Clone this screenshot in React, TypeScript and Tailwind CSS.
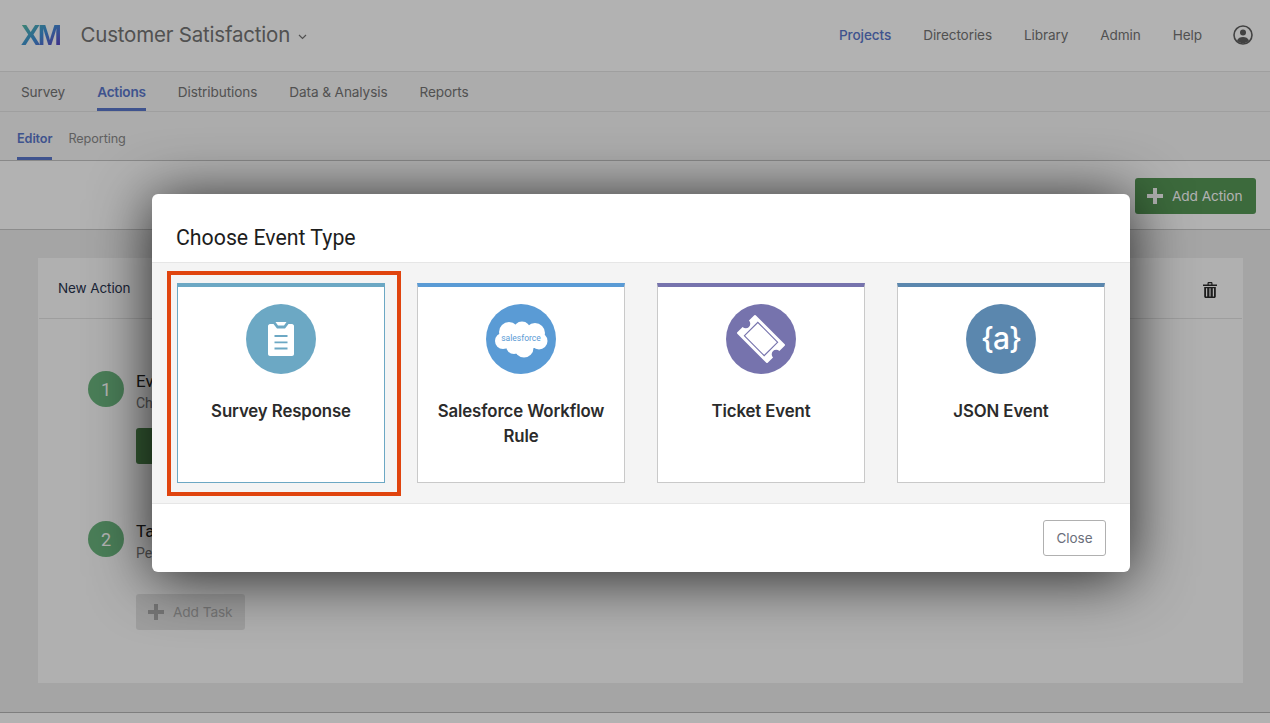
import type { ReactNode } from "react";

const font = "font-['Roboto',sans-serif]";

function PlusIcon({ className }: { className: string }) {
  return (
    <svg width="16" height="16" viewBox="0 0 16 16" className={className}>
      <path d="M6 0h4v6h6v4h-6v6H6v-6H0V6h6z" fill="currentColor" />
    </svg>
  );
}

function UserIcon() {
  return (
    <svg width="20" height="20" viewBox="0 0 20 20" className="text-[#5f5f5f]">
      <circle cx="10" cy="10" r="9" fill="none" stroke="currentColor" strokeWidth="1.6" />
      <circle cx="10" cy="7.6" r="3" fill="currentColor" />
      <path d="M4 15.6c1-2.6 3.4-3.6 6-3.6s5 1 6 3.6C14.500 17.400 12.300 18.300 10 18.300s-4.500-.9-6-2.700z" fill="currentColor" />
    </svg>
  );
}

function TrashIcon() {
  return (
    <svg width="14" height="16" viewBox="0 0 14 16" className="text-[#2a2a2a]">
      <path d="M0 2.500h14v1.500H0zM4.500 2.500V1.200C4.500.5 5 0 5.700 0h2.600c.7 0 1.200.5 1.200 1.200v1.300H8.300V1.200H5.700v1.300z" fill="currentColor" />
      <path d="M1.200 5h11.600v9.500c0 .8-.7 1.500-1.500 1.500H2.700c-.8 0-1.500-.7-1.500-1.500zM3 6.200v8.300h1.200V6.200zm3.400 0v8.300h1.200V6.200zm3.400 0v8.300H11V6.200z" fill="currentColor" fillRule="evenodd" />
    </svg>
  );
}

function ClipboardIcon() {
  return (
    <svg width="26" height="34" viewBox="0 0 26 34">
      <path d="M2 2h3.500L9 6.500h8L20.500 2H24c1 0 2 1 2 2V32c0 1-1 2-2 2H2c-1 0-2-1-2-2V4c0-1 1-2 2-2z" fill="#fff" />
      <path d="M7.500 0h11L16 3.500h-6z" fill="#fff" />
      <path d="M6.500 14h13M6.500 20.300h13M6.500 26.500h13" stroke="#6ca8c4" strokeWidth="1.800" />
    </svg>
  );
}

function SalesforceIcon() {
  return (
    <svg width="54" height="38" viewBox="0 0 54 38">
      <g fill="#fff">
        <circle cx="15" cy="12" r="10" />
        <circle cx="28" cy="10" r="8.500" />
        <circle cx="41" cy="13" r="10" />
        <circle cx="9" cy="21" r="8" />
        <circle cx="45" cy="21" r="8.500" />
        <circle cx="20" cy="26" r="8" />
        <circle cx="30" cy="28" r="9.500" />
        <rect x="10" y="10" width="36" height="18" />
      </g>
      <text x="27" y="20.500" textAnchor="middle" fontFamily="Roboto, sans-serif" fontSize="8.500" fill="#5a9bd5">
        salesforce
      </text>
    </svg>
  );
}

function TicketIcon() {
  return (
    <svg width="54" height="54" viewBox="0 0 54 54">
      <g transform="rotate(-45 27 27)">
        <path
          d="M15 5.500H22.500A4.500 4.500 0 0 0 31.500 5.500H39a1 1 0 0 1 1 1V47.500a1 1 0 0 1-1 1H31.500A4.500 4.500 0 0 0 22.500 48.500H15a1 1 0 0 1-1-1V6.500a1 1 0 0 1 1-1z"
          fill="#fff"
        />
        <rect x="17.500" y="13" width="19" height="28" fill="none" stroke="#7673ad" strokeWidth="1.100" />
      </g>
    </svg>
  );
}

type EventCard = {
  label: ReactNode;
  border: string;
  topBorder: string;
  bg: string;
  icon: ReactNode;
};

const cards: EventCard[] = [
  {
    label: "Survey Response",
    border: "border-[#6ca8c4]",
    topBorder: "border-t-[#6ca8c4]",
    bg: "bg-[#6ca8c4]",
    icon: <ClipboardIcon />,
  },
  {
    label: "Salesforce Workflow Rule",
    border: "border-[#c9c9c9]",
    topBorder: "border-t-[#5a9bd5]",
    bg: "bg-[#5a9bd5]",
    icon: <SalesforceIcon />,
  },
  {
    label: "Ticket Event",
    border: "border-[#c9c9c9]",
    topBorder: "border-t-[#7673ad]",
    bg: "bg-[#7673ad]",
    icon: <TicketIcon />,
  },
  {
    label: "JSON Event",
    border: "border-[#c9c9c9]",
    topBorder: "border-t-[#5b87ae]",
    bg: "bg-[#5b87ae]",
    icon: <span className="-mt-[3px] font-['Inter',sans-serif] text-[30px] font-medium leading-none tracking-[-1px] text-white">{"{a}"}</span>,
  },
];

function StepCircle({ n }: { n: number }) {
  return (
    <div className="flex h-9 w-9 shrink-0 items-center justify-center rounded-full bg-[#6bb57e] text-[18px] text-white">
      {n}
    </div>
  );
}

export default function App() {
  return (
    <div className={`relative h-[723px] w-full overflow-hidden bg-white ${font}`}>
      {/* Page behind the dialog */}
      <header className="flex h-[72px] items-center border-b border-[#e4e4e4] pl-[21px] pr-[17px]">
        <span className="bg-gradient-to-br from-[#5fc49a] via-[#3f8fd8] to-[#5a2fc0] bg-clip-text font-['Liberation_Sans',sans-serif] text-[29px] font-bold leading-none tracking-[-2.500px] text-transparent">
          XM
        </span>
        <span className="ml-[21px] font-['Inter',sans-serif] text-[20.500px] tracking-[-0.2px] text-[#757575]">
          Customer Satisfaction
        </span>
        <svg width="9" height="6" viewBox="0 0 9 6" className="ml-[8px] mt-[2px] text-[#757575]">
          <path d="M1 1l3.500 3.500L8 1" fill="none" stroke="currentColor" strokeWidth="1.200" />
        </svg>
        <nav className="ml-auto flex items-center gap-8 font-['Inter',sans-serif] text-[13.600px] tracking-[-0.1px] text-[#757575]">
          <span className="font-medium text-[#5b78cc]">Projects</span>
          <span>Directories</span>
          <span>Library</span>
          <span>Admin</span>
          <span>Help</span>
          <span className="ml-[-1px] flex">
            <UserIcon />
          </span>
        </nav>
      </header>

      <div className="flex h-[40px] gap-8 border-b border-[#e4e4e4] bg-[#f6f6f6] pl-[21px] font-['Inter',sans-serif] text-[13.600px] tracking-[-0.1px] text-[#757575]">
        <span className="flex items-center pt-[2px]">Survey</span>
        <span className="flex items-center border-b-[3px] border-[#5b78cc] pt-[5px] font-semibold tracking-[-0.2px] text-[#5b78cc]">Actions</span>
        <span className="flex items-center pt-[2px]">Distributions</span>
        <span className="flex items-center pt-[2px]">Data &amp; Analysis</span>
        <span className="flex items-center pt-[2px]">Reports</span>
      </div>

      <div className="flex h-[49px] gap-4 border-b border-[#c4c4c4] bg-[#f6f6f6] pl-[17px] font-['Inter',sans-serif] text-[12.700px] tracking-[-0.1px] text-[#8a8a8a]">
        <span className="flex items-center border-b-[3px] border-[#5b78cc] pt-[9px] font-semibold text-[#5b78cc]">Editor</span>
        <span className="flex items-center pt-[6px]">Reporting</span>
      </div>

      <div className="flex h-[69px] items-center justify-end border-b border-[#c9c9c9] bg-white pr-[14px]">
        <button className="mt-[2px] flex h-9 w-[121px] items-center gap-[9px] rounded-[3px] bg-[#569856] pl-[12px] font-['Inter',sans-serif] text-[13.700px] tracking-[-0.1px] text-white">
          <PlusIcon className="text-white" />
          Add Action
        </button>
      </div>

      <main className="h-[483px] border-b border-[#b5b5b5] bg-[#ececec] pl-[38px] pr-[27px] pt-[28px]">
        <section className="h-[425px] border border-[#fcfcfc] bg-[#fcfcfc]">
          <div className="flex h-[60px] items-center justify-between border-b border-[#e2e2e2] pl-[19px] pr-[25px]">
            <span className="font-['Inter',sans-serif] text-[13.500px] tracking-[-0.1px] text-[#2a3550]">New Action</span>
            <span className="mt-[2px] flex">
              <TrashIcon />
            </span>
          </div>
          <div className="flex flex-col pl-[49px] pt-[52px]">
            <div className="flex gap-[12px]">
              <StepCircle n={1} />
              <div className="pt-[1px]">
                <p className="text-[17px] leading-[18px] text-[#222]">Event</p>
                <p className="mt-[3px] text-[14px] leading-[20px] text-[#777]">Choose an event</p>
                <div className="mt-[15px] h-9 w-[120px] rounded-[3px] bg-[#4b8249]" />
              </div>
            </div>
            <div className="mt-[57px] flex gap-[12px]">
              <StepCircle n={2} />
              <div className="pt-[1px]">
                <p className="text-[17px] leading-[18px] text-[#222]">Tasks</p>
                <p className="mt-[3px] text-[14px] leading-[20px] text-[#777]">Perform tasks</p>
                <button className="mt-[31px] flex h-9 w-[109px] items-center gap-[9px] rounded-[3px] bg-[#e3e3e3] pl-[12px] font-['Inter',sans-serif] text-[13.700px] tracking-[-0.1px] text-[#aaaaaa]">
                  <PlusIcon className="text-[#aaaaaa]" />
                  Add Task
                </button>
              </div>
            </div>
          </div>
        </section>
      </main>

      <div className="absolute inset-0 bg-black/30" />

      {/* Dialog */}
      <div className="absolute inset-0">
        <div className="ml-[152px] mt-[194px] w-[978px] overflow-hidden rounded-[6px] bg-white shadow-[0_5px_60px_rgba(0,0,0,0.8)]">
          <div className="flex h-[69px] items-end border-b border-[#e6e6e6] px-6 pb-[11px]">
            <h2 className="text-[21.300px] leading-[26px] text-[#1d1d1d]">Choose Event Type</h2>
          </div>
          <div className="flex h-[241px] gap-8 border-b border-[#e6e6e6] bg-[#f4f4f4] pl-[25px] pt-[20px]">
            {cards.map((card, i) => (
              <div
                key={i}
                className={`flex h-[200px] w-[208px] flex-col items-center border border-t-4 bg-white pt-[17px] ${card.border} ${card.topBorder}`}
              >
                <div className={`flex h-[70px] w-[70px] items-center justify-center rounded-full ${card.bg}`}>
                  {card.icon}
                </div>
                <p className="mt-[25px] px-[8px] text-center font-['Inter',sans-serif] text-[16.800px] font-semibold leading-[25px] tracking-[-0.1px] text-[#2b2b2b]">
                  {card.label}
                </p>
              </div>
            ))}
          </div>
          <div className="flex h-[68px] items-center justify-end pr-[24px]">
            <button className="h-9 w-[63px] rounded-[3px] border border-[#b0b0b0] bg-white font-['Inter',sans-serif] text-[13.500px] text-[#6b6f7b]">
              Close
            </button>
          </div>
        </div>
      </div>

      {/* Red highlight around the first card */}
      <div className="absolute left-[167px] top-[271px] h-[225px] w-[234px] border-4 border-[#e0440e]" />
    </div>
  );
}
